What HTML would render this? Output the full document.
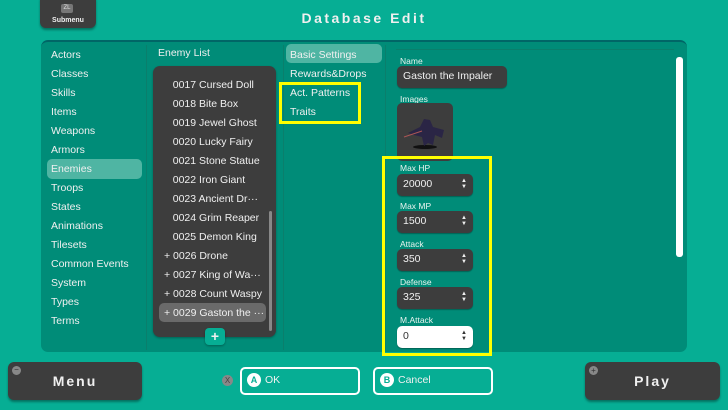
<!DOCTYPE html>
<html><head><style>
*{margin:0;padding:0;box-sizing:border-box}
body{width:728px;height:410px;background:#06ae94;font-family:"Liberation Sans",sans-serif;color:#f0f0f0;position:relative;overflow:hidden}
.a{position:absolute}
.t{font-size:10.5px;white-space:nowrap}
.lbl{font-size:8.5px;color:#e8f4f0}
.inp{background:#3d3d3d;border-radius:5px;font-size:10.5px;padding-left:6px;line-height:21px;box-shadow:0 1px 1px rgba(0,0,0,.3)}
.arr{position:absolute;right:6px;top:4px;font-size:6px;line-height:6px;text-align:center}
.btn{background:#3d3d3d;border-radius:6px;box-shadow:0 2px 2px rgba(0,0,0,.35)}
</style></head><body>
<div class="a btn" style="left:40px;top:-6px;width:56px;height:34px;border-radius:6px"></div>
<div class="a" style="left:61px;top:4px;width:12px;height:9px;background:#777;border-radius:2px;font-size:6px;text-align:center;line-height:9px;color:#ddd">ZL</div>
<div class="a" style="left:40px;top:17px;width:56px;text-align:center;font-size:7px;font-weight:bold">Submenu</div>
<div class="a" style="left:0;top:10px;width:728px;text-align:center;font-size:14px;font-weight:bold;letter-spacing:2.5px">Database Edit</div>

<div class="a" style="left:41px;top:40px;width:646px;height:312px;background:#008c78;border-radius:7px;border-top:2px solid #066"></div>
<div class="a" style="left:146px;top:45px;width:1px;height:305px;background:#0a7f6c"></div>
<div class="a" style="left:283px;top:45px;width:1px;height:305px;background:#0a7f6c"></div>
<div class="a" style="left:385px;top:45px;width:1px;height:305px;background:#0a7f6c"></div>
<div class="a" style="left:396px;top:49px;width:278px;height:1px;background:#0a7f6c"></div>

<div class="a" style="left:47px;top:159px;width:95px;height:20px;background:#4fb5a3;border-radius:5px"></div>
<div class="a t" style="left:51px;top:46px;line-height:19px">Actors<br>Classes<br>Skills<br>Items<br>Weapons<br>Armors<br>Enemies<br>Troops<br>States<br>Animations<br>Tilesets<br>Common Events<br>System<br>Types<br>Terms</div>

<div class="a t" style="left:158px;top:47px">Enemy List</div>
<div class="a" style="left:153px;top:66px;width:123px;height:271px;background:#3d3d3d;border-radius:7px;box-shadow:0 1px 2px rgba(0,0,0,.3)"></div>
<div class="a" style="left:269px;top:211px;width:3px;height:120px;background:#888;border-radius:2px"></div>
<div class="a" style="left:159px;top:303px;width:107px;height:19px;background:#6a6a6a;border-radius:5px"></div>
<div class="a t" style="left:164px;top:76px;line-height:19px;font-size:10.5px">
&nbsp;&nbsp;&nbsp;0017 Cursed Doll<br>&nbsp;&nbsp;&nbsp;0018 Bite Box<br>&nbsp;&nbsp;&nbsp;0019 Jewel Ghost<br>&nbsp;&nbsp;&nbsp;0020 Lucky Fairy<br>&nbsp;&nbsp;&nbsp;0021 Stone Statue<br>&nbsp;&nbsp;&nbsp;0022 Iron Giant<br>&nbsp;&nbsp;&nbsp;0023 Ancient Dr···<br>&nbsp;&nbsp;&nbsp;0024 Grim Reaper<br>&nbsp;&nbsp;&nbsp;0025 Demon King<br>+ 0026 Drone<br>+ 0027 King of Wa···<br>+ 0028 Count Waspy<br>+ 0029 Gaston the ···</div>
<div class="a" style="left:205px;top:328px;width:20px;height:17px;background:#06ae94;border-radius:4px;text-align:center;font-weight:bold;font-size:14px;line-height:16px;box-shadow:0 1px 2px rgba(0,0,0,.3)">+</div>

<div class="a" style="left:286px;top:44px;width:96px;height:19px;background:#4fb5a3;border-radius:5px"></div>
<div class="a t" style="left:290px;top:46px;line-height:19px">Basic Settings<br>Rewards&amp;Drops<br>Act. Patterns<br>Traits</div>
<div class="a" style="left:279px;top:82px;width:82px;height:42px;border:3px solid #ffff00"></div>

<div class="a" style="left:676px;top:57px;width:7px;height:200px;background:#fff;border-radius:3px"></div>
<div class="a lbl" style="left:400px;top:56px">Name</div>
<div class="a inp" style="left:397px;top:66px;width:110px;height:22px">Gaston the Impaler</div>
<div class="a lbl" style="left:400px;top:94px">Images</div>
<div class="a" style="left:397px;top:103px;width:56px;height:58px;background:#3d3d3d;border-radius:5px"></div>
<svg class="a" style="left:400px;top:113px" width="50" height="40"><ellipse cx="25" cy="34" rx="12" ry="2" fill="#111"/><path d="M8 20 L20 14 L24 6 L30 7 L33 14 L44 17 L42 25 L35 22 L33 32 L28 30 L24 33 L22 24 L14 22 Z" fill="#2a2545"/><path d="M4 24 L22 18" stroke="#a55" stroke-width="1"/></svg>
<div class="a" style="left:382px;top:156px;width:110px;height:200px;border:3px solid #ffff00"></div>
<div class="a lbl" style="left:400px;top:163px">Max HP</div>
<div class="a inp" style="left:397px;top:174px;width:76px;height:22px">20000<div class="arr">▲<br>▼</div></div>
<div class="a lbl" style="left:400px;top:201px">Max MP</div>
<div class="a inp" style="left:397px;top:211px;width:76px;height:22px">1500<div class="arr">▲<br>▼</div></div>
<div class="a lbl" style="left:400px;top:239px">Attack</div>
<div class="a inp" style="left:397px;top:249px;width:76px;height:22px">350<div class="arr">▲<br>▼</div></div>
<div class="a lbl" style="left:400px;top:277px">Defense</div>
<div class="a inp" style="left:397px;top:287px;width:76px;height:22px">325<div class="arr">▲<br>▼</div></div>
<div class="a lbl" style="left:400px;top:315px">M.Attack</div>
<div class="a inp" style="left:397px;top:326px;width:76px;height:22px;background:#fff;color:#333">0<div class="arr">▲<br>▼</div></div>

<div class="a btn" style="left:8px;top:362px;width:134px;height:38px"></div>
<div class="a" style="left:12px;top:366px;width:9px;height:9px;border-radius:50%;background:#888;font-size:8px;line-height:8px;text-align:center;color:#333">−</div>
<div class="a" style="left:8px;top:373px;width:134px;text-align:center;font-size:14px;font-weight:bold;letter-spacing:2px">Menu</div>
<div class="a btn" style="left:585px;top:362px;width:135px;height:38px"></div>
<div class="a" style="left:589px;top:366px;width:9px;height:9px;border-radius:50%;background:#888;font-size:8px;line-height:9px;text-align:center;color:#333">+</div>
<div class="a" style="left:585px;top:373px;width:135px;text-align:center;font-size:14px;font-weight:bold;letter-spacing:2px">Play</div>
<div class="a" style="left:222px;top:375px;width:11px;height:11px;border-radius:50%;background:#888;font-size:8px;line-height:11px;text-align:center;color:#444">X</div>
<div class="a" style="left:240px;top:367px;width:120px;height:28px;border:2px solid #fff;border-radius:5px"></div>
<div class="a" style="left:247px;top:373px;width:14px;height:14px;border-radius:50%;background:#fff;color:#06ae94;font-size:9px;text-align:center;line-height:14px;font-weight:bold">A</div>
<div class="a t" style="left:265px;top:374px">OK</div>
<div class="a" style="left:373px;top:367px;width:120px;height:28px;border:2px solid #fff;border-radius:5px"></div>
<div class="a" style="left:380px;top:373px;width:14px;height:14px;border-radius:50%;background:#fff;color:#06ae94;font-size:9px;text-align:center;line-height:14px;font-weight:bold">B</div>
<div class="a t" style="left:398px;top:374px">Cancel</div>
</body></html>
